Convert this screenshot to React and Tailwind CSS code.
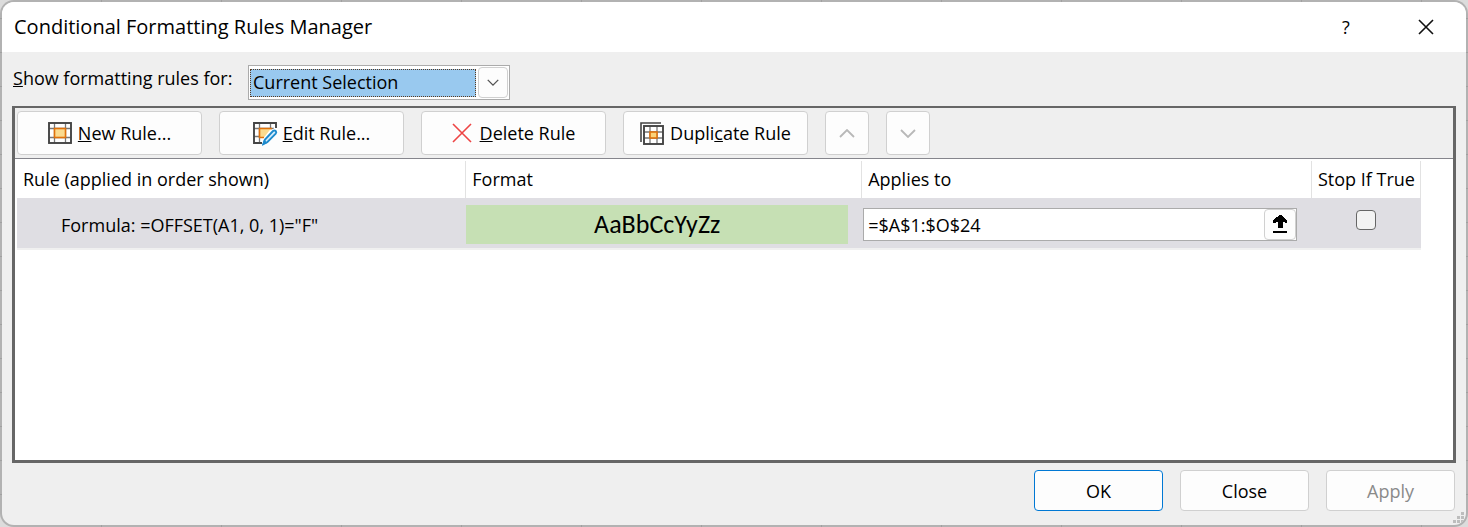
import { useState } from 'react';

const cx = (...names) => names.filter(Boolean).join(' ');

const GridIcon = () => (
  <svg width="24" height="22" viewBox="0 0 24 22" fill="none" aria-hidden="true">
    <rect x="1" y="1" width="22" height="20" fill="#fff" />
    <path d="M6.5 1v20M17.5 1v20M1 6.5h22M1 15.5h22" stroke="#777" strokeWidth="1.3" />
    <rect x="6.5" y="6.5" width="11" height="9" fill="#fbdb8f" stroke="#e0720c" strokeWidth="1.6" />
    <rect x="1" y="1" width="22" height="20" stroke="#444" strokeWidth="1.9" />
  </svg>
);

const EditIcon = () => (
  <svg width="24" height="22" viewBox="0 0 24 22" fill="none" aria-hidden="true" className="overflow-visible">
    <path d="M1 1h22v5L9 21H1z" fill="#fff" />
    <path d="M6.5 1v20M17.5 1v6M1 6.5h20M1 14.5h6" stroke="#777" strokeWidth="1.3" />
    <path d="M6.5 15.5v-9H18L11 15.5z" fill="#fbdb8f" />
    <path d="M6.5 16V6.5H19M6 15.5h5" stroke="#e0720c" strokeWidth="1.6" />
    <path d="M9 21H1V1h22v5" stroke="#444" strokeWidth="1.9" />
    <path d="M10 22.5 11.5 17 21 7.5q2-1 3 1t-.5 3.5L14 21z" fill="#fff" stroke="#fff" strokeWidth="2" />
    <path d="m10.5 22 1.5-4.5L20 9q1.5-1.2 2.700 0t0 2.700L14.5 20z" fill="#d9eefb" stroke="#1e8bcd" strokeWidth="1.9" />
    <path d="m9 23 2-5.5 3.5 3.5z" fill="#1e8bcd" />
  </svg>
);

const DeleteIcon = () => (
  <svg width="20" height="20" viewBox="0 0 20 20" fill="none" aria-hidden="true">
    <path d="M1 1l18 18M19 1 1 19" stroke="#ee4444" strokeWidth="1.6" />
  </svg>
);

const DuplicateIcon = () => (
  <svg width="24" height="23" viewBox="0 0 24 23" fill="none" aria-hidden="true">
    <path d="M1 20V1h20" stroke="#444" strokeWidth="1.6" />
    <rect x="4" y="4" width="19" height="18" fill="#fff" />
    <path d="M10 4v18M17 4v18M4 10h19M4 16h19" stroke="#777" strokeWidth="1.3" />
    <rect x="10" y="10" width="7" height="6" fill="#fbd37a" stroke="#e0720c" strokeWidth="1.6" />
    <rect x="4" y="4" width="19" height="18" stroke="#444" strokeWidth="1.9" />
  </svg>
);

const Chevron = ({ up, className }) => (
  <svg width="16" height="9" viewBox="0 0 16 9" fill="none" aria-hidden="true" className={className}>
    <path d={up ? 'M1 8l7-7 7 7' : 'M1 1l7 7 7-7'} stroke="currentColor" strokeWidth="1.8" />
  </svg>
);

const CollapseIcon = () => (
  <svg width="16" height="18" viewBox="0 0 16 18" fill="#000" aria-hidden="true">
    <path d="M7 0h3v1h1v1h1v1h1v1h1v1h1v3h-2V7h-2v6H6V7H4v1H1V5h1V4h1V3h1V2h2V1h1zM1 16h14v2H1z" />
  </svg>
);

const ToolButton = ({ className, children, ...rest }) => (
  <button
    type="button"
    className={cx('h-11 flex items-center justify-center bg-[#fdfdfd] border border-[#d0d0d0] rounded', className)}
    {...rest}
  >
    {children}
  </button>
);

const FooterButton = ({ className, ...rest }) => (
  <button
    type="button"
    className={cx('w-[129px] h-[41px] bg-[#fdfdfd] border rounded disabled:text-[#8a8a8a]', className)}
    {...rest}
  />
);

const rules = [
  { id: 1, label: 'Formula: =OFFSET(A1, 0, 1)="F"', range: '=$A$1:$O$24', stop: false },
];

const headCell = 'h-[37px] pb-0.5 pl-1.5 text-left font-normal whitespace-nowrap border-r border-[#e2e2e2]';

const App = () => {
  const [scope, setScope] = useState('Current Selection');
  const [items, setItems] = useState(rules);

  const update = (id, patch) =>
    setItems(items.map((item) => (item.id === id ? { ...item, ...patch } : item)));

  return (
    <div className="min-h-screen flex bg-[#dcdcdc] text-black text-[18px] leading-6 font-['Open_Sans','Noto_Sans',sans-serif]">
      {/* Worksheet grid shows through the thin window frame */}
      <div className="flex-1 flex p-0.5 rounded-[14px] bg-[#b2b2b2] bg-[linear-gradient(to_right,#a0a0a0_1px,transparent_1px),linear-gradient(#a0a0a0_1px,transparent_1px)] bg-[length:120px_34px] bg-[position:101px_18px]">
        <div role="dialog" aria-labelledby="dialog-title" className="relative flex-1 flex flex-col bg-[#efefef] rounded-xl overflow-hidden">
          {/* Title bar */}
          <header className="h-[50px] flex items-center bg-white pl-3 pr-8">
            <h1 id="dialog-title" className="flex-1 text-[20px]">Conditional Formatting Rules Manager</h1>
            <button type="button" aria-label="Help" className="w-6 mr-[60px] text-[18px]">?</button>
            <button type="button" aria-label="Close dialog" className="w-4 h-4">
              <svg width="16" height="16" viewBox="0 0 16 16" fill="none" aria-hidden="true">
                <path d="M1 1l14 14M15 1 1 15" stroke="#111" strokeWidth="1.6" />
              </svg>
            </button>
          </header>

          <div className="flex items-center pt-[13px] pb-1.5 pl-[11px]">
            <label htmlFor="scope" className="w-[235px] pb-2.5 whitespace-nowrap"><u>S</u>how formatting rules for:</label>
            <div className="w-[262px] h-[35px] flex items-center gap-0.5 p-px border border-[#ababab] bg-white">
              <select
                id="scope"
                value={scope}
                onChange={(e) => setScope(e.target.value)}
                className="flex-1 h-7 pl-0.5 pb-0.5 appearance-none bg-[#99c9ef] border border-dotted border-[#5a3a20] outline-none"
              >
                <option>Current Selection</option>
                <option>This Worksheet</option>
              </select>
              <span className="w-[30px] h-[31px] flex items-center justify-center bg-[#fdfdfd] border border-[#d0d0d0] rounded-sm">
                <Chevron className="w-3 text-[#555]" />
              </span>
            </div>
          </div>

          {/* Rules panel */}
          <main className="flex-1 flex flex-col mx-2.5 border-[3px] border-t-2 border-[#666]">
            <div className="flex gap-[17px] px-0.5 py-[3px]">
              <ToolButton className="w-[185px] gap-1.5"><GridIcon /><span><u>N</u>ew Rule...</span></ToolButton>
              <ToolButton className="w-[185px] gap-1.5"><EditIcon /><span><u>E</u>dit Rule...</span></ToolButton>
              <ToolButton className="w-[185px] gap-2"><DeleteIcon /><span><u>D</u>elete Rule</span></ToolButton>
              <ToolButton className="w-[185px] gap-1.5"><DuplicateIcon /><span>Dupli<u>c</u>ate Rule</span></ToolButton>
              <ToolButton className="w-11 text-[#b8b8b8]" aria-label="Move up" disabled><Chevron up /></ToolButton>
              <ToolButton className="w-11 text-[#b8b8b8]" aria-label="Move down" disabled><Chevron /></ToolButton>
            </div>

            <div className="flex-1 bg-white border-t border-[#85858c] pt-0.5 pl-0.5 pr-8">
              <table className="w-full table-fixed border-separate border-spacing-0">
                <colgroup>
                  <col className="w-[32%]" />
                  <col className="w-[28.2%]" />
                  <col />
                  <col className="w-[109px]" />
                </colgroup>
                <thead>
                  <tr>
                    <th className={headCell}>Rule (applied in order shown)</th>
                    <th className={headCell}>Format</th>
                    <th className={headCell}>Applies to</th>
                    <th className={headCell}>Stop If True</th>
                  </tr>
                </thead>
                <tbody>
                  {items.map((item) => (
                    <tr key={item.id} className="h-[52px] bg-[#dfdee3]">
                      <td className="pl-11 pt-1 border-b-2 border-[#f0f0f0] whitespace-nowrap">{item.label}</td>
                      <td className="pt-0.5 pr-3.5 border-b-2 border-[#f0f0f0]">
                        <div className="h-[39px] flex items-center justify-center bg-[#c6e0b4] text-[26px] font-['Carlito','Lato',sans-serif]">
                          AaBbCcYyZz
                        </div>
                      </td>
                      <td className="pt-0.5 pl-px pr-[15px] border-b-2 border-[#f0f0f0]">
                        <div className="h-[33px] flex items-center bg-white border border-[#ababab]">
                          <input
                            type="text"
                            aria-label="Applies to"
                            value={item.range}
                            onChange={(e) => update(item.id, { range: e.target.value })}
                            className="flex-1 min-w-0 pt-0.5 pl-1 outline-none"
                          />
                          <button type="button" aria-label="Collapse dialog" className="w-8 h-[31px] flex items-center justify-center bg-[#fdfdfd] border border-[#d0d0d0] rounded">
                            <CollapseIcon />
                          </button>
                        </div>
                      </td>
                      <td className="pb-1.5 pr-0.5 border-b-2 border-[#f0f0f0] text-center">
                        <input
                          type="checkbox"
                          aria-label="Stop If True"
                          checked={item.stop}
                          onChange={(e) => update(item.id, { stop: e.target.checked })}
                          className="block mx-auto w-5 h-5 appearance-none bg-[#f3f3f3] border border-[#666] rounded checked:bg-[#0078d4]"
                        />
                      </td>
                    </tr>
                  ))}
                </tbody>
              </table>
            </div>
          </main>

          <footer className="flex justify-end gap-[17px] pt-[7px] pb-3.5 pr-[11px]">
            <FooterButton className="border-[#0078d4]">OK</FooterButton>
            <FooterButton className="border-[#d0d0d0]">Close</FooterButton>
            <FooterButton className="border-[#d0d0d0]" disabled>Apply</FooterButton>
          </footer>

          {/* Resize grip */}
          <svg width="11" height="11" viewBox="0 0 11 11" fill="#bdbdbd" aria-hidden="true" className="absolute right-0.5 bottom-0.5">
            <path d="M8 0h3v3H8zM8 4h3v3H8zM8 8h3v3H8zM4 4h3v3H4zM4 8h3v3H4zM0 8h3v3H0z" />
          </svg>
        </div>
      </div>
    </div>
  );
};

export default App;
